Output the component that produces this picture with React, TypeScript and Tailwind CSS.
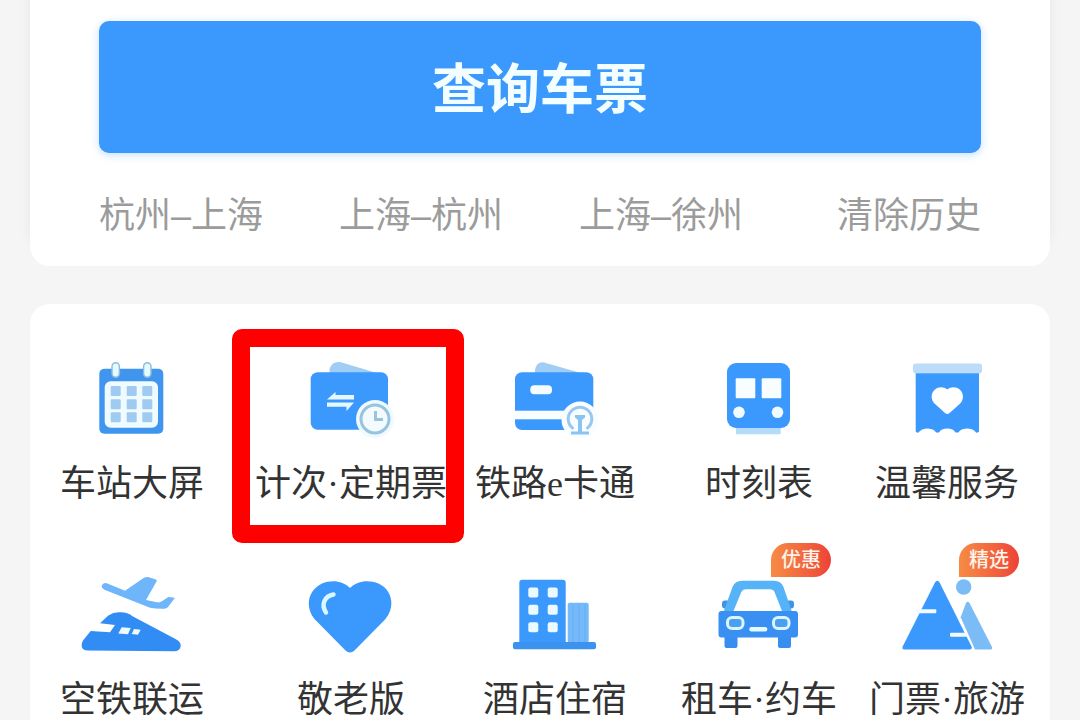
import type { ReactNode } from "react";

type Service = {
  label: string;
  icon: ReactNode;
  badge?: string;
  highlighted?: boolean;
};

const routes = ["杭州–上海", "上海–杭州", "上海–徐州"];

function Icon({ children }: { children: ReactNode }) {
  return (
    <svg
      viewBox="0 0 110 80"
      className="h-20 w-[110px]"
      fill="#3b98fc"
      aria-hidden="true"
    >
      {children}
    </svg>
  );
}

function CalendarIcon() {
  return (
    <Icon>
      <rect x="22.3" y="10.8" width="64" height="65" rx="5" fill="#4096ee" />
      <rect x="27.7" y="23.3" width="53.3" height="46.5" rx="6" fill="#f0fbff" />
      {[33, 46.2, 59.2].map((y) =>
        [38.7, 54.7, 70.3].map((x) => (
          <rect
            key={`${x}-${y}`}
            x={x - 5}
            y={y - 5}
            width="10"
            height="10"
            rx="1"
            fill="#9fcbf3"
          />
        ))
      )}
      <rect x="35" y="4.7" width="7.4" height="14.6" rx="3.7" fill="#e2fbff" stroke="#8fb9dc" strokeWidth="1.4" />
      <rect x="66.6" y="4.7" width="7.4" height="14.6" rx="3.7" fill="#e2fbff" stroke="#8fb9dc" strokeWidth="1.4" />
    </Icon>
  );
}

function TicketClockIcon() {
  return (
    <Icon>
      <path d="M33.5 16V11Q36 3 44 4L81 15V17Z" fill="#9fcdf3" />
      <rect x="14.7" y="14.3" width="77.3" height="57.5" rx="7" />
      <path
        d="M31 41.5L39.5 34V37H58V41.5ZM31 44.5H58L50.5 53V48.8H31Z"
        fill="#e6f8ff"
      />
      <circle cx="79" cy="61" r="19" fill="#effaff" />
      <circle cx="79" cy="61" r="14" fill="#f3fbff" stroke="#9ac3dd" strokeWidth="3" />
      <path d="M79.5 53V61.5H87" fill="none" stroke="#9ac3dd" strokeWidth="3" />
    </Icon>
  );
}

function RailCardIcon() {
  return (
    <Icon>
      <path d="M35 16V12Q37 3 44 4.5L81 15V17Z" fill="#9fcdf3" />
      <rect x="15" y="14.3" width="78.3" height="57.7" rx="7" />
      <rect x="30.3" y="27.3" width="21.7" height="9" rx="4" fill="#f4fcff" />
      <rect x="14" y="52.7" width="60" height="8.6" fill="#f8fdff" />
      <circle cx="80" cy="62" r="18.5" fill="#f8fdff" />
      <path
        d="M73.5 70.8A11.8 11.8 0 1 1 86.5 70.8"
        fill="none"
        stroke="#9bc9ee"
        strokeWidth="3"
      />
      <path
        d="M75 57H85V59.5L82 62V73.5H89V76.5H71V73.5H78V62L75 59.5Z"
        fill="#8cc3ef"
      />
    </Icon>
  );
}

function TrainIcon() {
  return (
    <Icon>
      <rect x="32" y="68" width="44.7" height="8.3" rx="1" fill="#b4dbfa" />
      <rect x="23" y="5" width="63" height="65" rx="9" />
      <rect x="31.7" y="20.3" width="19.6" height="20" rx="1" fill="#f8fdff" />
      <rect x="57.7" y="20.3" width="19.6" height="20" rx="1" fill="#f8fdff" />
      <circle cx="35" cy="54.3" r="5.8" fill="#f0fbff" />
      <circle cx="73.5" cy="54.3" r="5.8" fill="#f0fbff" />
    </Icon>
  );
}

function ServiceIcon() {
  return (
    <Icon>
      <rect x="21" y="5.5" width="69" height="10" rx="3" fill="#bcdcf9" />
      <path d="M23.7 15.3H87V73.5Q86 75 84 74.5Q81.5 70.5 74.5 70.5Q68 71 66.5 74.5H63.5Q61.5 70.5 55.3 70.5Q49 70.5 47 74.5H44Q42.5 71 36 70.5Q29.5 70.5 26.5 74.5Q24.5 75 23.7 73.5Z" />
      <path
        d="M55.3 31.5C52 28.8 46.5 28.5 43 31.5C38.5 35.5 38.8 41.5 42.5 45.5L53 55Q55.3 57 57.6 55L68.2 45.5C72 41.5 72 35.5 67.7 31.5C64 28.5 58.7 28.8 55.3 31.5Z"
        fill="#fff"
      />
    </Icon>
  );
}

function PlaneTrainIcon() {
  return (
    <Icon>
      <path
        d="M29.7 9.3L48 16.7L67 3.8Q69.5 2.4 72 3.2L79 5.5Q80.4 6.3 79.5 7.5L69 26L80 28.3Q83 28.8 85 27.3L91.3 22.9L98 23.7L91 33Q89.5 34.8 87 34.7Q79 35 73 33.7L27.5 15.7Q23.5 13.5 25.3 10.7Q26.8 8.5 29.7 9.3Z"
        fill="#6fb5f9"
      />
      <path
        d="M23 49.3L31.3 41.5Q37 37.8 43 38.3Q50 38 56 42.5L98.5 65Q104 68 103.7 71.5Q103.5 77.3 97 77.3L10 76.5Q4.7 76 4.7 71.5Q4.5 69 6 66.5L13.7 57L33 58.3L38 51Z"
        fill="#318df4"
      />
      <path d="M44.7 53.3L53.7 54L51 60.3L41.3 59.5ZM57 55L63.7 55.7L61 60.7L54.7 60Z" fill="#effaff" />
    </Icon>
  );
}

function HeartIcon() {
  return (
    <Icon>
      <path d="M54 14C47 7 36 5.2 26 9.5C12 16 8.5 33 18.5 45L49.5 76.5Q54 80.5 58.5 76.5L89.5 45C99.5 33 96.5 16 82.5 9.5C72 5.2 61 7 54 14Z" />
      <path
        d="M37.5 20.5C29 22 24.5 30 30 38.5"
        fill="none"
        stroke="#d9f8ff"
        strokeWidth="4.5"
        strokeLinecap="round"
      />
    </Icon>
  );
}

function HotelIcon() {
  return (
    <Icon>
      <rect x="67.7" y="28.7" width="21" height="40" rx="2" fill="#74b9f9" />
      <path d="M73 31V68M79 31V68M85 31V68" stroke="#68adf2" strokeWidth="1" />
      <rect x="19.3" y="5.7" width="46.4" height="66" rx="3" />
      <rect x="13" y="68" width="83" height="7.2" rx="2" fill="#3c92ef" />
      {[18.5, 35.7, 53.2].map((y) =>
        [33.3, 52.7].map((x) => (
          <rect
            key={`${x}-${y}`}
            x={x - 5}
            y={y - 5}
            width="10"
            height="10"
            rx="2"
            fill="#ebfaff"
          />
        ))
      )}
    </Icon>
  );
}

function CarIcon() {
  return (
    <Icon>
      <rect x="18" y="26.5" width="8" height="8" rx="3" fill="#3f93e8" />
      <rect x="82" y="26.5" width="8" height="8" rx="3" fill="#3f93e8" />
      <rect x="20.5" y="60" width="13" height="14" rx="2" fill="#378df0" />
      <rect x="74" y="60" width="13" height="14" rx="2" fill="#378df0" />
      <path
        fillRule="evenodd"
        d="M19.5 38L28.5 13Q31 6.7 38 6.7H70Q77 6.7 79.5 13L88 38ZM29.5 37H78L70.5 18Q69.3 15.3 66 15.3H41.5Q38.5 15.3 37.3 18Z"
        fill="#57b3f8"
      />
      <rect x="14.5" y="37" width="79.5" height="26.5" rx="3" fill="#3a8ff2" />
      <rect x="23.5" y="43.5" width="15.5" height="11" rx="4.5" fill="#4b9ff0" stroke="#d9f5ff" strokeWidth="3" />
      <rect x="69.5" y="43.5" width="15.5" height="11" rx="4.5" fill="#4b9ff0" stroke="#d9f5ff" strokeWidth="3" />
      <rect x="45.3" y="53" width="18" height="4.5" rx="2" fill="#e5f9ff" />
    </Icon>
  );
}

function MountainIcon() {
  return (
    <Icon>
      <circle cx="71.7" cy="13" r="7.7" fill="#7bbcf7" />
      <path
        d="M68.7 43.3L74 29Q75.7 26.5 77.5 29L100 73Q100.8 75.5 98.5 75.5H83Z"
        fill="#7bbcf7"
      />
      <path d="M43 8.5Q45.3 5 47.6 8.5L79.5 72.5Q80.5 75.5 77.5 75.5H12.5Q9.5 75.5 10.7 72.5Z" />
      <rect x="24" y="35.3" width="20.3" height="4" rx="1" fill="#f1fbff" />
      <rect x="58" y="58.7" width="17" height="4" rx="1" fill="#f1fbff" />
    </Icon>
  );
}

const services: Service[] = [
  { label: "车站大屏", icon: <CalendarIcon /> },
  { label: "计次·定期票", icon: <TicketClockIcon />, highlighted: true },
  { label: "铁路e卡通", icon: <RailCardIcon /> },
  { label: "时刻表", icon: <TrainIcon /> },
  { label: "温馨服务", icon: <ServiceIcon /> },
  { label: "空铁联运", icon: <PlaneTrainIcon /> },
  { label: "敬老版", icon: <HeartIcon /> },
  { label: "酒店住宿", icon: <HotelIcon /> },
  { label: "租车·约车", icon: <CarIcon />, badge: "优惠" },
  { label: "门票·旅游", icon: <MountainIcon />, badge: "精选" },
];

export default function App() {
  return (
    <main className="flex min-h-screen flex-col gap-[38px] bg-[#f5f5f5] px-[30px] font-['Liberation_Serif','Noto_Sans_CJK_SC',serif]">
      {/* Ticket search */}
      <section className="rounded-b-[20px] bg-white px-[69px] pt-[21px] pb-7 shadow-[0_-16px_14px_rgba(0,0,0,0.06)]">
        <button
          type="button"
          className="h-[132px] w-full rounded-[10px] bg-[#3b98fc] pt-2 text-[54px] font-bold text-[#f2feff] shadow-[0_2px_8px_rgba(59,152,252,0.3)]"
        >
          查询车票
        </button>
        <div className="mt-[41px] grid grid-cols-[240fr_240fr_240fr_162fr] font-['Liberation_Sans','Noto_Sans_CJK_SC',sans-serif] text-4xl leading-[44px] whitespace-nowrap text-[#9b9b9b]">
          {routes.map((route) => (
            <a key={route} href="#">
              {route}
            </a>
          ))}
          <button type="button" className="text-right">
            清除历史
          </button>
        </div>
      </section>

      {/* Services */}
      <section className="flex-1 rounded-t-[20px] bg-white pt-[54px] pr-8">
        <div className="grid grid-cols-[minmax(0,204fr)_minmax(0,234fr)_minmax(0,174fr)_minmax(0,234fr)_minmax(0,142fr)] gap-y-[68px]">
          {services.map((service) => (
            <a
              key={service.label}
              href="#"
              className="relative flex flex-col items-center gap-6 text-4xl leading-[44px] whitespace-nowrap text-[#333]"
            >
              <div className="relative">
                {service.icon}
                {service.badge && (
                  <span className="absolute -top-[31px] left-[67px] flex h-[34px] w-[60px] items-center justify-center rounded-[17px] rounded-bl-none bg-linear-to-r from-[#f68b45] to-[#ed4138] text-xl font-medium text-[#fff3ea]">
                    {service.badge}
                  </span>
                )}
              </div>
              <span>{service.label}</span>
              {service.highlighted && (
                <div className="absolute -top-[29px] right-1 -bottom-[37px] -left-0.5 rounded-[10px] border-[18px] border-[#fe0000]"></div>
              )}
            </a>
          ))}
        </div>
      </section>
    </main>
  );
}
